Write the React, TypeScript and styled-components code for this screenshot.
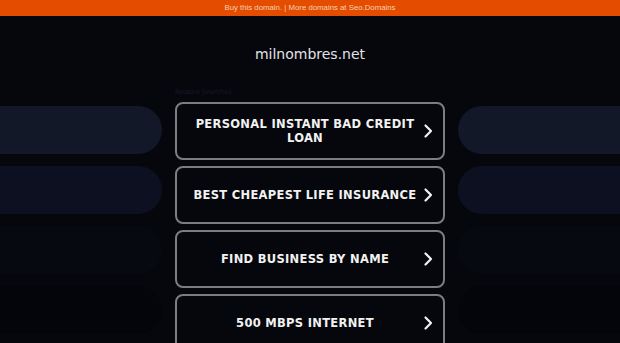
import styled, { createGlobalStyle } from "styled-components";

const GlobalStyle = createGlobalStyle`
  html, body {
    margin: 0;
    padding: 0;
    background: #06070c;
    overflow: hidden;
  }
`;

const Page = styled.div`
  width: 620px;
  height: 343px;
  background: #06070c;
  font-family: "DejaVu Sans", sans-serif;
  overflow: hidden;
`;

const TopBar = styled.div`
  height: 16px;
  background: #e44d00;
  color: #f7cdb0;
  font-family: "Liberation Sans", Arial, sans-serif;
  font-size: 7.8px;
  line-height: 16px;
  text-align: center;
`;

const Title = styled.h1`
  margin: 0;
  height: 72px;
  padding-top: 29px;
  box-sizing: border-box;
  text-align: center;
  color: #e2e2e6;
  font-size: 14px;
  font-weight: normal;
  line-height: 18px;
`;

const Body = styled.div`
  display: grid;
  grid-template-columns: 1fr 270px 1fr;
  column-gap: 13px;
`;

const PillColumn = styled.div`
  display: flex;
  flex-direction: column;
  gap: 12px;
  padding-top: 18px;
`;

const pillColors = ["#131829", "#0d1020", "#070911", "#04050b"];

const Pill = styled.div<{ $shade: number; $side: "left" | "right" }>`
  height: 48px;
  background: ${(p) => pillColors[p.$shade]};
  border-radius: ${(p) => (p.$side === "left" ? "0 24px 24px 0" : "24px 0 0 24px")};
`;

const Center = styled.div`
  display: flex;
  flex-direction: column;
`;

const Label = styled.div`
  font-size: 6.5px;
  color: #16182b;
  height: 14px;
  line-height: 8px;
`;

const CardList = styled.div`
  display: flex;
  flex-direction: column;
  gap: 6px;
`;

const Card = styled.a`
  display: flex;
  align-items: center;
  height: 58px;
  box-sizing: border-box;
  border: 2px solid #7d7d80;
  border-radius: 8px;
  padding: 0 8px 0 14px;
  color: #f2f2f2;
  text-decoration: none;
`;

const CardText = styled.span`
  flex: 1;
  text-align: center;
  font-weight: bold;
  font-size: 11.5px;
  letter-spacing: 0.3px;
  line-height: 14px;
`;

const Chevron = styled.svg`
  width: 14px;
  height: 16px;
  margin-left: 2px;
  flex-shrink: 0;
`;

const items = [
  "PERSONAL INSTANT BAD CREDIT LOAN",
  "BEST CHEAPEST LIFE INSURANCE",
  "FIND BUSINESS BY NAME",
  "500 MBPS INTERNET",
];

export default function App() {
  return (
    <Page>
      <GlobalStyle />
      <TopBar>Buy this domain. | More domains at Seo.Domains</TopBar>
      <Title>milnombres.net</Title>
      <Body>
        <PillColumn>
          {pillColors.map((_, i) => (
            <Pill key={i} $shade={i} $side="left" />
          ))}
        </PillColumn>
        <Center>
          <Label>Related Searches</Label>
          <CardList>
            {items.map((t) => (
              <Card key={t} href="#">
                <CardText>{t}</CardText>
                <Chevron viewBox="0 0 14 16">
                  <path
                    d="M4.5 2.5 L10 8 L4.5 13.5"
                    fill="none"
                    stroke="#f2f2f2"
                    strokeWidth="2.2"
                    strokeLinecap="round"
                    strokeLinejoin="round"
                  />
                </Chevron>
              </Card>
            ))}
          </CardList>
        </Center>
        <PillColumn>
          {pillColors.map((_, i) => (
            <Pill key={i} $shade={i} $side="right" />
          ))}
        </PillColumn>
      </Body>
    </Page>
  );
}
